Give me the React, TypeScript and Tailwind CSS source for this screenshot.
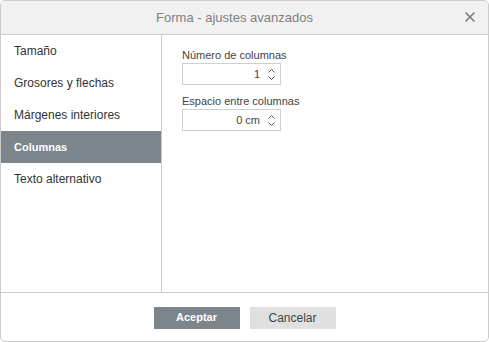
import React from "react";

const tabs = ["Tamaño", "Grosores y flechas", "Márgenes interiores", "Columnas", "Texto alternativo"];

function Spin({ value }: { value: string }) {
  return (
    <div className="flex h-[22px] w-[99px] items-center border border-[#cfcfcf] bg-white">
      <span className="flex-1 pr-[6px] text-right text-[11px] text-[#444]">{value}</span>
      <div className="flex w-[14px] flex-col items-center justify-center gap-[3px] pr-[3px]">
        <svg width="7" height="4" viewBox="0 0 7 4">
          <path d="M0.5 3.5 L3.5 0.5 L6.5 3.5" fill="none" stroke="#555" strokeWidth="1" />
        </svg>
        <svg width="7" height="4" viewBox="0 0 7 4">
          <path d="M0.5 0.5 L3.5 3.5 L6.5 0.5" fill="none" stroke="#555" strokeWidth="1" />
        </svg>
      </div>
    </div>
  );
}

export default function App() {
  return (
    <div className="h-[342px] w-[489px] bg-white font-['Liberation_Sans',Arial,sans-serif]">
      <div className="flex h-full flex-col overflow-hidden rounded-[5px] border border-[#cbcbcb]">
        <div className="relative flex h-[34px] shrink-0 items-center justify-center border-b border-[#cbcbcb] bg-[#f1f1f1] pr-[20px]">
          <span className="text-[13px] text-[#808080]">Forma - ajustes avanzados</span>
          <svg className="absolute right-[13px] top-[11px]" width="10" height="10" viewBox="0 0 10 10">
            <path d="M0.5 0.5 L9.5 9.5 M9.5 0.5 L0.5 9.5" stroke="#777" strokeWidth="1.5" />
          </svg>
        </div>
        <div className="flex flex-1">
          <div className="w-[161px] shrink-0 border-r border-[#cbcbcb]">
            {tabs.map((t) => (
              <div
                key={t}
                className={
                  t === "Columnas"
                    ? "flex h-[32px] items-center bg-[#7d858c] pl-[13px] text-[11px] font-bold text-white"
                    : "flex h-[32px] items-center pl-[13px] text-[12px] text-[#333]"
                }
              >
                {t}
              </div>
            ))}
          </div>
          <div className="flex flex-col pl-[20px] pt-[13px]">
            <div className="text-[11px] leading-[14px] text-[#444]">Número de columnas</div>
            <div className="mt-[1px]">
              <Spin value="1" />
            </div>
            <div className="mt-[9px] text-[11px] leading-[14px] text-[#444]">Espacio entre columnas</div>
            <div className="mt-[1px]">
              <Spin value="0 cm" />
            </div>
          </div>
        </div>
        <div className="flex h-[49px] shrink-0 items-center justify-center gap-[10px] border-t border-[#cbcbcb] pt-[1px]">
          <button className="h-[22px] w-[86px] bg-[#7d858c] text-[11px] font-bold text-white">Aceptar</button>
          <button className="h-[22px] w-[86px] bg-[#e0e0e0] text-[12px] text-[#444]">Cancelar</button>
        </div>
      </div>
    </div>
  );
}
